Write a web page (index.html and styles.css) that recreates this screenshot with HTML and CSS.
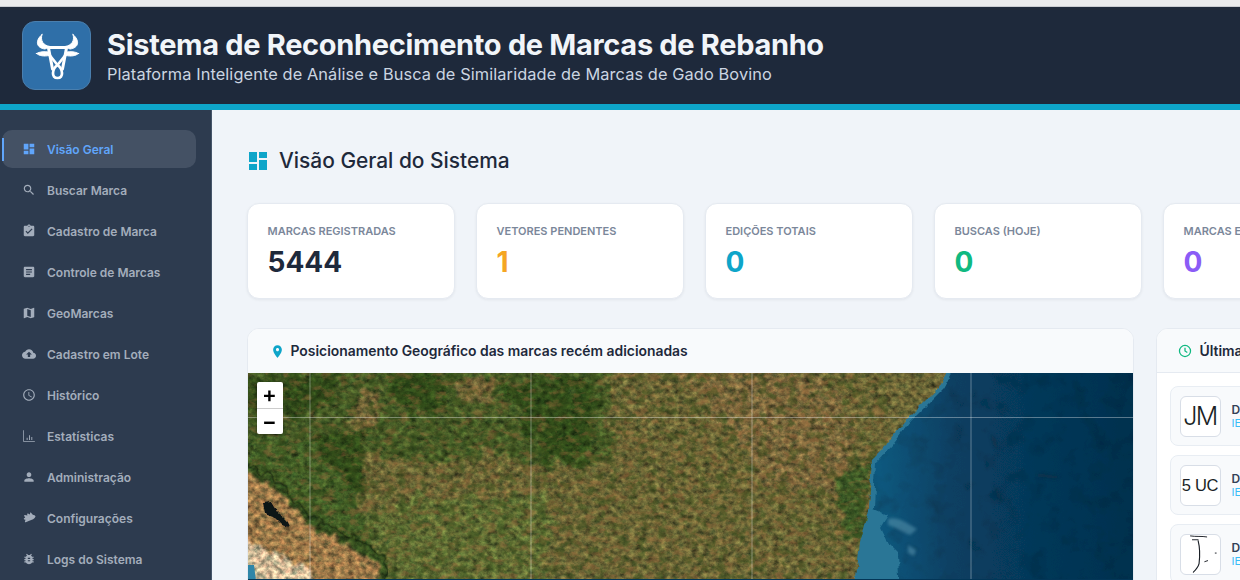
FILE: index.html
```html
<!DOCTYPE html>
<html lang="pt-BR">
<head>
  <meta charset="UTF-8" />
  <title>Sistema de Reconhecimento de Marcas de Rebanho</title>
  <link rel="stylesheet" href="styles.css">
</head>
<body>

<div class="top-strip"></div>

<header class="app-header">
  <div class="logo">
    <svg viewBox="0 0 48 48" width="48" height="48" fill="none" stroke="#fff" stroke-linecap="round" stroke-linejoin="round">
      <path d="M9 2.500C1.500 9 3.500 16 12 17L17 14.500C10.500 13.500 7 9 9 2.500zM40 2.500C47.500 9 45.500 16 37 17L32 14.500C38.500 13.500 42 9 40 2.500z" fill="#fff" stroke-width="1"/>
      <path d="M3.500 21.500C7 19.500 11 19.500 15.500 20L16 23.500C11 24.500 6.500 24 3.500 21.500zM45.500 21.500C42 19.500 38 19.500 33.500 20L33 23.500C38 24.500 42.500 24 45.500 21.500z" fill="#fff" stroke-width="1"/>
      <path d="M16 15.500H33M15.500 16L19.500 37M33.500 16L29.500 37" stroke-width="3"/>
      <path d="M16.500 23L24.500 33 32.500 23M24.500 33C19 37 18 46 24.500 46S30 37 24.500 33z" stroke-width="2.700"/>
    </svg>
  </div>
  <div>
    <h1>Sistema de Reconhecimento de Marcas de Rebanho</h1>
    <p>Plataforma Inteligente de Análise e Busca de Similaridade de Marcas de Gado Bovino</p>
  </div>
</header>

<div class="layout">
  <nav class="sidebar">
    <a class="nav-item active" href="#"><svg viewBox="0 0 24 24"><path d="M3 13h8V3H3v10zm0 8h8v-6H3v6zm10 0h8V11h-8v10zm0-18v6h8V3h-8z"/></svg>Visão Geral</a>
    <a class="nav-item" href="#"><svg viewBox="0 0 24 24"><path d="M15.500 14h-.79l-.28-.27C15.410 12.590 16 11.110 16 9.500 16 5.910 13.090 3 9.500 3S3 5.910 3 9.500 5.910 16 9.500 16c1.610 0 3.090-.59 4.230-1.570l.27.28v.79l5 4.990L20.490 19l-4.990-5zm-6 0C7.010 14 5 11.990 5 9.500S7.010 5 9.500 5 14 7.010 14 9.500 11.990 14 9.500 14z"/></svg>Buscar Marca</a>
    <a class="nav-item" href="#"><svg viewBox="0 0 24 24"><path d="M19 3h-4.180C14.400 1.840 13.300 1 12 1c-1.300 0-2.400.84-2.820 2H5c-1.100 0-2 .9-2 2v14c0 1.100.9 2 2 2h14c1.100 0 2-.9 2-2V5c0-1.100-.9-2-2-2zm-7 0c.55 0 1 .45 1 1s-.45 1-1 1-1-.45-1-1 .45-1 1-1zm-2 14l-4-4 1.410-1.410L10 14.170l6.590-6.590L18 9l-8 8z"/></svg>Cadastro de Marca</a>
    <a class="nav-item" href="#"><svg viewBox="0 0 24 24"><path d="M19 3H5c-1.100 0-2 .9-2 2v14c0 1.100.9 2 2 2h14c1.100 0 2-.9 2-2V5c0-1.100-.9-2-2-2zm-5 14H7v-2h7v2zm3-4H7v-2h10v2zm0-4H7V7h10v2z"/></svg>Controle de Marcas</a>
    <a class="nav-item" href="#"><svg viewBox="0 0 24 24"><path d="M20.500 3l-.16.03L15 5.100 9 3 3.360 4.900c-.21.07-.36.25-.36.48V20.500c0 .28.22.5.5.5l.16-.03L9 18.900l6 2.100 5.640-1.900c.21-.07.36-.25.36-.48V3.500c0-.28-.22-.5-.5-.5zM15 19l-6-2.110V5l6 2.110V19z"/></svg>GeoMarcas</a>
    <a class="nav-item" href="#"><svg viewBox="0 0 24 24"><path d="M19.350 10.040C18.670 6.590 15.640 4 12 4 9.110 4 6.600 5.640 5.350 8.040 2.340 8.360 0 10.910 0 14c0 3.310 2.690 6 6 6h13c2.760 0 5-2.240 5-5 0-2.640-2.050-4.780-4.650-4.960zM14 13v4h-4v-4H7l5-5 5 5h-3z"/></svg>Cadastro em Lote</a>
    <a class="nav-item" href="#"><svg viewBox="0 0 24 24"><path d="M11.990 2C6.470 2 2 6.480 2 12s4.470 10 9.990 10C17.520 22 22 17.520 22 12S17.520 2 11.990 2zM12 20c-4.420 0-8-3.580-8-8s3.580-8 8-8 8 3.580 8 8-3.580 8-8 8zm.5-13H11v6l5.250 3.150.75-1.230-4.500-2.670z"/></svg>Histórico</a>
    <a class="nav-item" href="#"><svg viewBox="0 0 24 24"><path d="M2 2h1.300v18.700H22V22H2zM8 15h1.600v4H8zM12 10.500h1.600V19H12zM16 13.500h1.600V19H16z"/></svg>Estatísticas</a>
    <a class="nav-item" href="#"><svg viewBox="0 0 24 24"><path d="M12 12c2.210 0 4-1.790 4-4s-1.790-4-4-4-4 1.790-4 4 1.790 4 4 4zm0 2c-2.670 0-8 1.340-8 4v2h16v-2c0-2.660-5.330-4-8-4z"/></svg>Administração</a>
    <a class="nav-item" href="#"><svg viewBox="0 0 24 24"><path d="M22.700 8.500c-.4-.9-2-1.800-4.200-2L15.500 3c-.6-.7-1.500-.4-1.600.4l-.3 2.400-3.300-1.600c-.8-.4-1.700.2-1.500 1.100l.4 2.200-4.200-.5c-1-.1-1.600 1-1 1.800l1.500 2.200-2 1.600c-.7.600-.4 1.700.5 1.900l2 .3-1 3.200c-.3.9.6 1.700 1.500 1.300l6-2.800c4.500-.5 9.500-3.500 10.700-6.900z"/></svg>Configurações</a>
    <a class="nav-item" href="#"><svg viewBox="0 0 24 24"><path d="M20 8h-2.810c-.45-.78-1.070-1.450-1.820-1.960L17 4.410 15.590 3l-2.170 2.170C12.960 5.060 12.490 5 12 5c-.49 0-.96.06-1.410.17L8.410 3 7 4.410l1.620 1.630C7.880 6.550 7.260 7.220 6.810 8H4v2h2.090c-.05.33-.09.66-.09 1v1H4v2h2v1c0 .34.04.67.09 1H4v2h2.810c1.040 1.790 2.970 3 5.190 3s4.150-1.210 5.190-3H20v-2h-2.090c.05-.33.09-.66.09-1v-1h2v-2h-2v-1c0-.34-.04-.67-.09-1H20V8zm-6 8h-4v-2h4v2zm0-4h-4v-2h4v2z"/></svg>Logs do Sistema</a>
  </nav>

  <main class="content">
    <h2 class="page-title">
      <svg viewBox="0 0 18 18" width="18" height="18"><path d="M0 0h8v10H0zM10 0h8v6h-8zM0 12h8v6H0zM10 8h8v10h-8z"/></svg>
      Visão Geral do Sistema
    </h2>

    <section class="stats">
      <div class="stat-card"><span class="stat-label">Marcas Registradas</span><strong class="stat-value">5444</strong></div>
      <div class="stat-card"><span class="stat-label">Vetores Pendentes</span><strong class="stat-value orange">1</strong></div>
      <div class="stat-card"><span class="stat-label">Edições Totais</span><strong class="stat-value blue">0</strong></div>
      <div class="stat-card"><span class="stat-label">Buscas (Hoje)</span><strong class="stat-value green">0</strong></div>
      <div class="stat-card"><span class="stat-label">Marcas E</span><strong class="stat-value purple">0</strong></div>
    </section>

    <section class="panels">
      <div class="panel map-panel">
        <div class="panel-head">
          <svg class="pin" viewBox="0 0 24 24"><path d="M12 2C8.130 2 5 5.130 5 9c0 5.250 7 13 7 13s7-7.750 7-13c0-3.870-3.130-7-7-7zm0 9.500c-1.380 0-2.500-1.120-2.500-2.500s1.120-2.500 2.500-2.500 2.500 1.120 2.500 2.500-1.120 2.500-2.500 2.500z"/></svg>
          Posicionamento Geográfico das marcas recém adicionadas
        </div>
        <div class="map">
          <svg class="map-art" viewBox="0 0 886 206" width="886" height="206" preserveAspectRatio="none">
            <defs>
              <filter id="landTex" x="0" y="0" width="100%" height="100%" color-interpolation-filters="sRGB">
                <feTurbulence type="fractalNoise" baseFrequency="0.16 0.19" numOctaves="5" seed="7" result="n"/>
                <feColorMatrix in="n" type="matrix" values="1.100 .3 0 0 -.2  .9 .5 0 0 -.2  .9 .5 0 0 -.2  0 0 0 0 1" result="g"/>
                <feComposite in="SourceGraphic" in2="g" operator="arithmetic" k1="1.100" k2=".36" k3="0" k4="0"/>
              </filter>
              <filter id="patch" x="-10%" y="-10%" width="120%" height="120%">
                <feTurbulence type="fractalNoise" baseFrequency="0.07" numOctaves="4" seed="3" result="n"/>
                <feDisplacementMap in="SourceGraphic" in2="n" scale="34" xChannelSelector="R" yChannelSelector="G"/>
                <feGaussianBlur stdDeviation="1"/>
              </filter>
              <filter id="flecks" x="0" y="0" width="100%" height="100%" color-interpolation-filters="sRGB">
                <feTurbulence type="fractalNoise" baseFrequency="0.08 0.14" numOctaves="4" seed="21"/>
                <feColorMatrix type="matrix" values="0 0 0 0 .58  0 0 0 0 .4  0 0 0 0 .23  5 0 0 0 -2.600"/>
              </filter>
              <filter id="darkFlecks" x="0" y="0" width="100%" height="100%" color-interpolation-filters="sRGB">
                <feTurbulence type="fractalNoise" baseFrequency="0.1 0.12" numOctaves="4" seed="33"/>
                <feColorMatrix type="matrix" values="0 0 0 0 .2  0 0 0 0 .3  0 0 0 0 .1  5 0 0 0 -2.500"/>
              </filter>
              <filter id="edge" x="-5%" y="-5%" width="110%" height="110%">
                <feTurbulence type="fractalNoise" baseFrequency="0.09" numOctaves="3" seed="11" result="n"/>
                <feDisplacementMap in="SourceGraphic" in2="n" scale="6" xChannelSelector="R" yChannelSelector="G"/>
              </filter>
              <filter id="rough" x="-10%" y="-10%" width="120%" height="120%">
                <feTurbulence type="fractalNoise" baseFrequency="0.12" numOctaves="4" seed="17" result="n"/>
                <feDisplacementMap in="SourceGraphic" in2="n" scale="14" xChannelSelector="R" yChannelSelector="G"/>
                <feGaussianBlur stdDeviation=".8"/>
              </filter>
              <filter id="soft" x="-20%" y="-20%" width="140%" height="140%">
                <feGaussianBlur stdDeviation="1.800"/>
              </filter>
              <filter id="seaTex" x="0" y="0" width="100%" height="100%" color-interpolation-filters="sRGB">
                <feTurbulence type="fractalNoise" baseFrequency="0.05" numOctaves="3" seed="5" result="n"/>
                <feColorMatrix in="n" type="matrix" values=".35 0 0 0 .82  .35 0 0 0 .82  .35 0 0 0 .82  0 0 0 0 1" result="g"/>
                <feComposite in="SourceGraphic" in2="g" operator="arithmetic" k1="1" k2="0" k3="0" k4="0"/>
              </filter>
              <linearGradient id="seaGrad" x1="0" x2="1" y1="0" y2="0">
                <stop offset="0" stop-color="#0f5a80"/>
                <stop offset=".3" stop-color="#083f62"/>
                <stop offset="1" stop-color="#03304e"/>
              </linearGradient>
            </defs>

            <g filter="url(#landTex)">
              <rect width="886" height="240" fill="#756f3b"/>
              <g filter="url(#patch)">
                <path d="M-20-20H360L360 85 300 95 240 80 190 92 120 82 60 76-20 60z" fill="#4d6329"/>
                <path d="M-5 0H95L85 30 40 45-5 40zM135 0H200L190 45 150 32zM250 10H345L342 85 300 88 270 40zM52 62H110L120 125 78 115z" fill="#35511c"/>
                <path d="M-20 60 60 65 120 140 170 240H-20z" fill="#4a662c"/>
                <path d="M120 135 165 125 300 120 300 240H130z" fill="#687639"/>
                <path d="M430 0H570L610 60 585 120 520 110 480 50z" fill="#857142"/>
                <path d="M215 5 250 5 245 35 210 30zM110 20H130V55H105z" fill="#7c6e3e"/>
                <path d="M590 100 625 90 612 170 595 160z" fill="#446229"/>
              </g>
            </g>
            <rect width="640" height="206" filter="url(#flecks)" opacity=".45"/>
            <rect width="640" height="206" filter="url(#darkFlecks)" opacity=".45"/>
            <g filter="url(#landTex)">
              <path d="M-5 88 30 108 62 142 110 168 140 184 134 240H-5z" fill="#3b5620" filter="url(#rough)"/>
              <path d="M-5 96 27 116 58 150 105 176 132 192 128 240H-5z" fill="#a9834f" filter="url(#rough)"/>
              <path d="M-5 165 25 180 60 195 80 240H-5z" fill="#e0c8a2" filter="url(#rough)"/>
            </g>

            <path d="M14 130l10-1 6 10 10 10 2 5-8-2-8-8-10-4z" fill="#0e1216" filter="url(#edge)"/>
            <path d="M-2 192h8l2 16h-10z" fill="#2f86a8"/>

            <g filter="url(#edge)">
              <path d="M702-8 690 15 659 46 640 70 624 86 621 136 612 170 605 230H890V-8z" fill="#2a7696"/>
              <path d="M708-8 695 16 663 48 644 73 628 90 626 136 640 142 632 155 638 168 650 180 652 230H890V-8z" fill="url(#seaGrad)" filter="url(#seaTex)"/>
            </g>
            <g filter="url(#soft)">
              <path d="M640 146c10-3 20 5 29 10l-7 6c-6-2-12-7-22-10zM660 172l8 5-2 6-6-3z" fill="#5f9cb3" opacity=".5"/>
              <path d="M742 60l6 6 2 12-5-6zM790 100l22 3-4 3-18-2zM745 110l7 11 3 10-6-7z" fill="#0a2c46" opacity=".7"/>
            </g>

            <g class="graticule">
              <path d="M62 0V206M283 0V206M504 0V206M723 0V206M0 44.500H886"/>
            </g>
          </svg>
          <div class="zoom-ctrl">
            <a href="#">+</a>
            <a href="#">−</a>
          </div>
        </div>
      </div>

      <div class="panel side-panel">
        <div class="panel-head">
          <svg class="clock" viewBox="0 0 24 24" fill="none" stroke="#10b981" stroke-width="2.200"><circle cx="12" cy="12" r="9.500"/><path d="M12 6.500V12l4 2.500"/></svg>
          Última
        </div>
        <div class="recent-list">
          <div class="recent-item">
            <div class="thumb"><span>JM</span></div>
            <div class="recent-text"><b>D</b><em>IE</em></div>
          </div>
          <div class="recent-item">
            <div class="thumb"><span class="small">5 UC</span></div>
            <div class="recent-text"><b>D</b><em>IE</em></div>
          </div>
          <div class="recent-item">
            <div class="thumb">
              <svg viewBox="0 0 41 41" width="41" height="41" fill="none" stroke="#1a1f26" stroke-linecap="round">
                <path d="M10 1c6 1 12 0 17 1M12 5h6" stroke-width="1"/>
                <path d="M18 6c2 8 2 16 1 24-1 4-3 6-6 9" stroke-width="1.200"/>
                <path d="M25 28l3-1M36 19h1" stroke-width="1"/>
              </svg>
            </div>
            <div class="recent-text"><b>D</b><em>IE</em></div>
          </div>
        </div>
      </div>
    </section>
  </main>
</div>

</body>
</html>
```

FILE: styles.css
```css
* {
  box-sizing: border-box;
}
html, body {
  height: 100%;
}
body {
  margin: 0;
  height: 580px;
  overflow: hidden;
  font-family: 'Inter', 'Noto Sans', sans-serif;
  background: #f0f4f9;
  color: #1e293b;
}
.top-strip {
  height: 7px;
  background: #e9eaec;
  border-bottom: 1px solid #c9ccd1;
}
.app-header {
  height: 103px;
  background: #1e293b;
  border-bottom: 6px solid #0ea5c9;
  padding: 14px 22px 0;
  display: flex;
  align-items: flex-start;
  gap: 16px;
}
.logo {
  width: 69px;
  height: 69px;
  flex: none;
  border-radius: 13px;
  background: #2f6fa8;
  border: 1px solid #4a7fae;
  display: flex;
  align-items: center;
  justify-content: center;
}
.app-header h1 {
  margin: 5px 0 0;
  font-size: 29px;
  line-height: 38px;
  font-weight: 700;
  letter-spacing: -0.32px;
  color: #f1f5f9;
  white-space: nowrap;
}
.app-header p {
  margin: 0;
  font-size: 16.350px;
  line-height: 20px;
  letter-spacing: 0.1px;
  color: #cbd5e1;
  white-space: nowrap;
}
.layout {
  display: flex;
  height: 470px;
}
.sidebar {
  width: 212px;
  flex: none;
  padding: 20px 15px 0 2px;
  background: #2d3b4f;
  border-right: 1px solid #46556a;
  overflow: hidden;
}
.nav-item {
  position: relative;
  display: flex;
  align-items: center;
  gap: 11px;
  height: 38px;
  margin-bottom: 3px;
  padding-left: 20px;
  border-radius: 10px;
  font-size: 12px;
  font-weight: 600;
  color: #a3adbb;
  text-decoration: none;
  white-space: nowrap;
}
.nav-item svg {
  width: 14px;
  height: 14px;
  flex: none;
  fill: #a3adbb;
}
.nav-item.active {
  background: #445164;
  color: #60a5fa;
}
.nav-item.active svg {
  fill: #60a5fa;
}
.nav-item.active::before {
  content: "";
  position: absolute;
  left: 0;
  top: 8px;
  width: 2px;
  height: 23px;
  background: #60a5fa;
}
.content {
  flex: none;
  width: 1158px;
  padding: 38px 0 0 34.500px;
}
.page-title {
  display: flex;
  align-items: center;
  gap: 12px;
  margin: 0 0 30px 2.500px;
  height: 25px;
  font-size: 20.900px;
  font-weight: 500;
  color: #1e293b;
  white-space: nowrap;
}
.page-title svg {
  fill: #0ea5c9;
}
.stats {
  display: grid;
  grid-template-columns: repeat(5, 208px);
  gap: 21px;
  margin-bottom: 29px;
}
.stat-card {
  height: 96px;
  padding: 20px;
  background: #fff;
  border: 1px solid #e5eaf1;
  border-radius: 12px;
  box-shadow: 0 1px 3px rgba(15, 23, 42, 0.06);
  white-space: nowrap;
  overflow: hidden;
}
.stat-label {
  display: block;
  font-size: 11px;
  line-height: 14px;
  font-weight: 600;
  text-transform: uppercase;
  color: #7b879a;
}
.stat-value {
  display: block;
  margin-top: 7px;
  font-size: 28px;
  line-height: 34px;
  font-weight: 700;
  color: #1e293b;
}
.orange { color: #f5a623; }
.blue { color: #0ea5c9; }
.green { color: #10b981; }
.purple { color: #8b5cf6; }
.panels {
  display: flex;
  gap: 22px;
  align-items: flex-start;
}
.panel {
  background: #fff;
  border: 1px solid #e5eaf1;
  border-radius: 12px;
  overflow: hidden;
  height: 300px;
}
.map-panel {
  width: 887px;
  flex: none;
}
.side-panel {
  width: 214px;
  flex: none;
}
.panel-head {
  display: flex;
  align-items: center;
  height: 44px;
  padding-left: 22px;
  gap: 6px;
  background: #f8fafc;
  font-size: 13.900px;
  font-weight: 600;
  color: #1e293b;
  white-space: nowrap;
}
.panel-head .pin {
  width: 15px;
  height: 15px;
  fill: #0ea5c9;
}
.panel-head .clock {
  width: 14px;
  height: 14px;
}
.side-panel .panel-head {
  padding-left: 21px;
  gap: 8px;
  border-bottom: 1px solid #e5eaf1;
}
.map {
  position: relative;
  height: 256px;
  background: #033657;
}
.map-art {
  display: block;
}
.graticule path {
  fill: none;
  stroke: #ffffff;
  stroke-opacity: 0.35;
  stroke-width: 1;
}
.zoom-ctrl {
  position: absolute;
  left: 9px;
  top: 9px;
  width: 26px;
  background: #fff;
  border-radius: 2px;
  box-shadow: 0 1px 3px rgba(0, 0, 0, 0.4);
}
.zoom-ctrl a {
  display: block;
  height: 26px;
  font-size: 22px;
  font-weight: 600;
  line-height: 25px;
  text-align: center;
  color: #000;
  text-decoration: none;
}
.zoom-ctrl a + a {
  border-top: 1px solid #ccc;
}
.recent-list {
  padding: 13px 13px 0;
  display: flex;
  flex-direction: column;
  gap: 9px;
}
.recent-item {
  display: flex;
  align-items: center;
  gap: 11px;
  height: 60px;
  padding-left: 9px;
  background: #f8fafc;
  border: 1px solid #e8edf3;
  border-radius: 8px;
}
.thumb {
  width: 41px;
  height: 41px;
  flex: none;
  display: flex;
  align-items: center;
  justify-content: center;
  background: #fff;
  border: 1px solid #d8dee7;
  border-radius: 6px;
  overflow: hidden;
}
.thumb span {
  font-family: 'Inter', sans-serif;
  font-size: 25px;
  font-weight: 300;
  letter-spacing: -1.500px;
  white-space: nowrap;
  color: #1a1f26;
}
.thumb span.small {
  font-family: 'Liberation Sans', sans-serif;
  font-size: 16.500px;
  font-weight: 400;
  letter-spacing: -0.3px;
}
.recent-text b {
  display: block;
  font-size: 12px;
  line-height: 14px;
  font-weight: 600;
  color: #334155;
}
.recent-text em {
  display: block;
  font-size: 11px;
  line-height: 13px;
  font-style: normal;
  color: #38bdf8;
}
```
